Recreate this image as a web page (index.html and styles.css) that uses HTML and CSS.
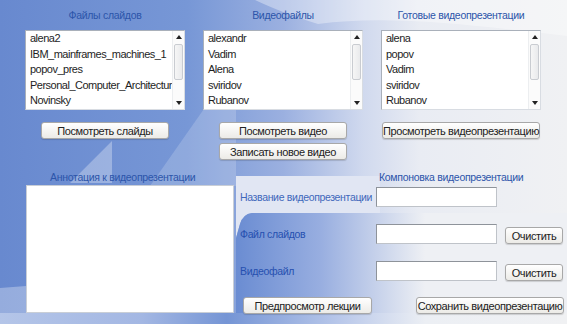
FILE: index.html
```html
<!DOCTYPE html>
<html lang="ru">
<head>
  <meta charset="UTF-8" />
  <meta name="viewport" content="width=device-width, initial-scale=1.0"/>
  <title>Компоновка видеопрезентации</title>
  <link rel="stylesheet" href="styles.css">
</head>
<body>
  <div class="screen">
    <svg class="backdrop" viewBox="0 0 567 324" preserveAspectRatio="none" aria-hidden="true">
      <defs>
        <linearGradient id="base" x1="0" x2="567" y1="0" y2="0" gradientUnits="userSpaceOnUse">
          <stop offset="0" stop-color="#6889cf"/>
          <stop offset="0.33" stop-color="#7797d6"/>
          <stop offset="0.5" stop-color="#9bb0e0"/>
          <stop offset="0.64" stop-color="#d0d9ee"/>
          <stop offset="0.74" stop-color="#e9ecf3"/>
          <stop offset="1" stop-color="#f0f1f3"/>
        </linearGradient>
        <linearGradient id="lower" x1="235" x2="425" y1="0" y2="0" gradientUnits="userSpaceOnUse">
          <stop offset="0" stop-color="#6a8cd2"/>
          <stop offset="0.45" stop-color="#98aee0"/>
          <stop offset="1" stop-color="#eef0f4"/>
        </linearGradient>
        <linearGradient id="strip" x1="0" x2="567" y1="0" y2="0" gradientUnits="userSpaceOnUse">
          <stop offset="0" stop-color="#b4c5e8"/>
          <stop offset="0.25" stop-color="#a3b7e3"/>
          <stop offset="0.4" stop-color="#7595d5"/>
          <stop offset="0.6" stop-color="#b9c8ea"/>
          <stop offset="0.75" stop-color="#eceff4"/>
          <stop offset="1" stop-color="#f0f1f3"/>
        </linearGradient>
      </defs>
      <rect width="567" height="324" fill="url(#base)"/>
      <path d="M255 0 H567 V36 C480 26 390 14 318 24 C292 16 272 8 255 0Z" fill="#ffffff" opacity="0.35"/>
      <path d="M206 106 L150 186 L236 186 L236 106Z" fill="#ffffff" opacity="0.18"/>
      <path d="M112 141 L70 183 L112 183Z" fill="#ffffff" opacity="0.3"/>
      <path d="M236 176 H380 V213 H252 Q243 214 240 224 L236 238Z" fill="#e1e6f3"/>
      <path d="M236 238 L240 224 Q243 214 252 213 H567 V313 H236Z" fill="url(#lower)"/>
      <path d="M0 288 L26 286 V313 H0Z" fill="#ffffff" opacity="0.3"/>
      <rect y="313" width="567" height="11" fill="url(#strip)"/>
    </svg>

    <div class="sources">
      <section class="column">
        <h2 class="title">Файлы слайдов</h2>
        <div class="listbox">
          <ul class="items">
            <li>alena2</li>
            <li>IBM_mainframes_machines_1</li>
            <li>popov_pres</li>
            <li>Personal_Computer_Architectur</li>
            <li>Novinsky</li>
          </ul>
          <div class="scrollbar">
            <span class="arrow up"></span>
            <span class="track"><span class="thumb"></span></span>
            <span class="arrow down"></span>
          </div>
        </div>
        <div class="actions">
          <button class="btn btn-mid">Посмотреть слайды</button>
        </div>
      </section>

      <section class="column">
        <h2 class="title">Видеофайлы</h2>
        <div class="listbox">
          <ul class="items">
            <li>alexandr</li>
            <li>Vadim</li>
            <li>Alena</li>
            <li>sviridov</li>
            <li>Rubanov</li>
          </ul>
          <div class="scrollbar">
            <span class="arrow up"></span>
            <span class="track"><span class="thumb"></span></span>
            <span class="arrow down"></span>
          </div>
        </div>
        <div class="actions">
          <button class="btn btn-mid">Посмотреть видео</button>
          <button class="btn btn-mid">Записать новое видео</button>
        </div>
      </section>

      <section class="column">
        <h2 class="title">Готовые видеопрезентации</h2>
        <div class="listbox">
          <ul class="items">
            <li>alena</li>
            <li>popov</li>
            <li>Vadim</li>
            <li>sviridov</li>
            <li>Rubanov</li>
          </ul>
          <div class="scrollbar">
            <span class="arrow up"></span>
            <span class="track"><span class="thumb"></span></span>
            <span class="arrow down"></span>
          </div>
        </div>
        <div class="actions">
          <button class="btn btn-long">Просмотреть видеопрезентацию</button>
        </div>
      </section>
    </div>

    <div class="editor">
      <section class="annotation">
        <h2 class="title">Аннотация к видеопрезентации</h2>
        <textarea class="memo"></textarea>
      </section>

      <section class="compose">
        <h2 class="title">Компоновка видеопрезентации</h2>
        <div class="row">
          <label class="label light">Название видеопрезентации</label>
          <input class="field" type="text">
        </div>
        <div class="row">
          <label class="label">Файл слайдов</label>
          <input class="field" type="text">
          <button class="btn btn-clear">Очистить</button>
        </div>
        <div class="row">
          <label class="label">Видеофайл</label>
          <input class="field" type="text">
          <button class="btn btn-clear">Очистить</button>
        </div>
        <div class="footer">
          <button class="btn btn-preview">Предпросмотр лекции</button>
          <button class="btn btn-save">Сохранить видеопрезентацию</button>
        </div>
      </section>
    </div>
  </div>
</body>
</html>
```

FILE: styles.css
```css
* {
  margin: 0;
  padding: 0;
  box-sizing: border-box;
  font-family: 'Liberation Sans', Arial, sans-serif;
}

body {
  background: #f0f1f3;
  overflow: hidden;
}

.screen {
  position: relative;
  width: 567px;
  height: 324px;
  padding-top: 8px;
  overflow: hidden;
}

.backdrop {
  position: absolute;
  top: 0;
  left: 0;
  width: 567px;
  height: 324px;
  z-index: 0;
}

.sources,
.editor {
  position: relative;
  z-index: 1;
}

.title {
  font-size: 10.5px;
  font-weight: normal;
  line-height: 14px;
  letter-spacing: -0.3px;
  color: #2c55aa;
  text-align: center;
}

/* верхний ряд: три списка */

.sources {
  display: grid;
  grid-template-columns: 160px 160px 160px;
  column-gap: 18px;
  padding-left: 25px;
  height: 162px;
}

.column .title {
  margin-bottom: 8px;
}

.listbox {
  display: flex;
  height: 80px;
  background: #fff;
  border: 1px solid #a9b0ba;
  border-right-color: #d8dce2;
  border-bottom-color: #d8dce2;
}

.items {
  flex: 1;
  list-style: none;
  overflow: hidden;
  padding-left: 4px;
}

.items li {
  font-size: 11px;
  line-height: 15.6px;
  letter-spacing: -0.5px;
  color: #1e1e1e;
  white-space: nowrap;
}

.scrollbar {
  width: 12px;
  display: flex;
  flex-direction: column;
  background: #fbfbfb;
  border-left: 1px solid #eceef0;
}

.arrow {
  height: 12px;
  display: flex;
  align-items: center;
  justify-content: center;
}

.arrow::before {
  content: '';
  border-left: 3px solid transparent;
  border-right: 3px solid transparent;
}

.arrow.up::before {
  border-bottom: 4px solid #222;
}

.arrow.down::before {
  border-top: 4px solid #222;
}

.track {
  flex: 1;
  padding: 1px 1px;
}

.thumb {
  display: block;
  height: 36px;
  border: 1px solid #c9ccd1;
  border-radius: 2px;
  background: linear-gradient(to right, #f6f6f6, #e9eaec);
}

.actions {
  display: flex;
  flex-direction: column;
  align-items: center;
  gap: 4px;
  margin-top: 12px;
}

.btn {
  height: 17px;
  font-size: 11px;
  letter-spacing: -0.4px;
  color: #222;
  background: linear-gradient(#ffffff, #ecebe7);
  border: 1px solid #a8a8a8;
  border-radius: 3px;
  box-shadow: 0 1px 1px rgba(0, 0, 0, 0.15);
  cursor: pointer;
  white-space: nowrap;
}

.btn-mid {
  width: 128px;
}

.btn-long {
  width: 158px;
}

/* нижний ряд */

.editor {
  display: flex;
  gap: 6px;
  padding-left: 26px;
}

.annotation {
  width: 208px;
}

.annotation .title {
  text-align: left;
  padding-left: 24px;
  margin-bottom: 1px;
}

.memo {
  display: block;
  width: 208px;
  height: 128px;
  resize: none;
  border: 1px solid #c9ced6;
  background: #fff;
}

.compose {
  width: 324px;
}

.compose .title {
  text-align: left;
  padding-left: 139px;
  margin-bottom: 3px;
}

.row {
  display: flex;
  align-items: center;
  height: 20px;
  margin-bottom: 17px;
}

.label {
  width: 136px;
  font-size: 10.5px;
  letter-spacing: -0.35px;
  color: #2650b0;
  white-space: nowrap;
}

.label.light {
  color: #3f68bb;
}

.field {
  width: 121px;
  height: 20px;
  background: #fff;
  border: 1px solid #bfc3c9;
  border-top-color: #8e939a;
  border-left-color: #8e939a;
}

.btn-clear {
  width: 58px;
  margin-left: 8px;
  margin-top: 3px;
}

.footer {
  display: flex;
  justify-content: space-between;
  padding-left: 3px;
  margin-top: -1px;
}

.btn-preview {
  width: 129px;
}

.btn-save {
  width: 148px;
}
```
